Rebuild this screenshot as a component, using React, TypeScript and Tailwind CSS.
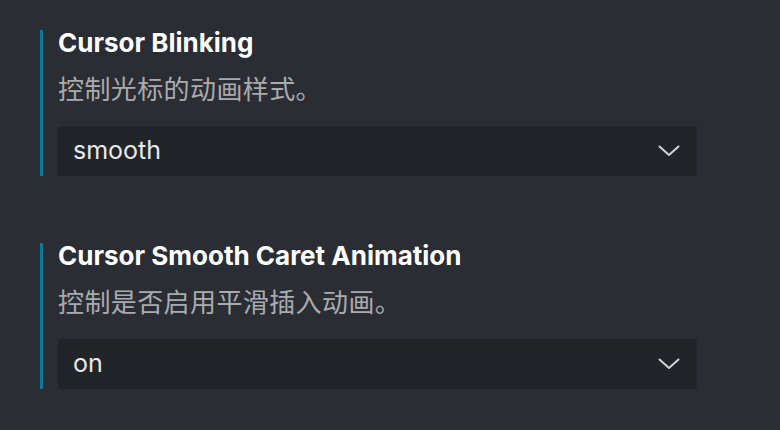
import React from "react";

function Chevron() {
  return (
    <svg width="22" height="12" viewBox="0 0 22 12" fill="none" className="shrink-0">
      <polyline points="1.5,1.5 11,10 20.5,1.5" stroke="#d4d4d4" strokeWidth="2" strokeLinecap="round" strokeLinejoin="round" />
    </svg>
  );
}

function Setting({ title, desc, value }: { title: string; desc: string; value: string }) {
  return (
    <div className="ml-[40px] border-l-[3px] border-[#0e7a98] pl-[15px] w-[657px]">
      <div className="text-[26px] leading-[26px] font-bold text-white" style={{ fontFamily: "Inter, 'Noto Sans', sans-serif" }}>
        {title}
      </div>
      <div className="mt-[17px] text-[26px] leading-[30px] tracking-[0.4px] text-[#a9abae]" style={{ fontFamily: "'Noto Sans CJK SC', sans-serif" }}>
        {desc}
      </div>
      <div className="mt-[23px] h-[50px] w-[639px] bg-[#212428] flex items-center justify-between pl-[15px] pr-[17px]">
        <span className="text-[25px] text-[#e8e8e8]" style={{ fontFamily: "Inter, 'Noto Sans', sans-serif" }}>{value}</span>
        <Chevron />
      </div>
    </div>
  );
}

export default function App() {
  return (
    <div className="w-[780px] h-[430px] bg-[#2a2d34] pt-[30px] overflow-hidden">
      <Setting title="Cursor Blinking" desc="控制光标的动画样式。" value="smooth" />
      <div className="h-[67px]" />
      <Setting title="Cursor Smooth Caret Animation" desc="控制是否启用平滑插入动画。" value="on" />
    </div>
  );
}
